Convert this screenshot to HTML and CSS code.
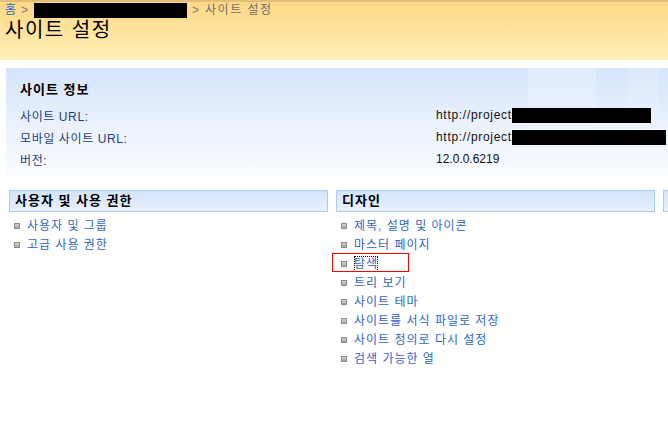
FILE: index.html
```html
<!DOCTYPE html>
<html lang="ko">
<head>
    <meta charset="UTF-8">
    <title>사이트 설정</title>
    <link rel="stylesheet" href="styles.css">
</head>
<body>

    <!-- Title area -->
    <header class="title-area">
        <div class="breadcrumb">
            <a href="#" class="crumb-home">홈</a>
            <span class="crumb-sep">&gt;</span>
            <span class="redact crumb-redact"></span>
            <span class="crumb-sep">&gt;</span>
            <span class="crumb-current">사이트 설정</span>
        </div>
        <h1 class="page-title">사이트 설정</h1>
    </header>

    <!-- Site info -->
    <section class="info-box">
        <div class="info-deco"></div>
        <h2 class="info-title">사이트 정보</h2>
        <div class="info-grid">
            <span class="info-label">사이트 URL:</span>
            <span class="info-value"><span class="url">http://project</span><span class="redact redact-1"></span></span>
            <span class="info-label">모바일 사이트 URL:</span>
            <span class="info-value"><span class="url">http://project</span><span class="redact redact-2"></span></span>
            <span class="info-label">버전:</span>
            <span class="info-value">12.0.0.6219</span>
        </div>
    </section>

    <!-- Settings columns -->
    <div class="columns">
        <div class="column">
            <h3 class="col-header">사용자 및 사용 권한</h3>
            <ul class="link-list">
                <li><a href="#">사용자 및 그룹</a></li>
                <li><a href="#">고급 사용 권한</a></li>
            </ul>
        </div>
        <div class="column">
            <h3 class="col-header">디자인</h3>
            <ul class="link-list">
                <li><a href="#">제목, 설명 및 아이콘</a></li>
                <li><a href="#">마스터 페이지</a></li>
                <li class="marked"><a href="#" class="focused">탐색</a></li>
                <li><a href="#">트리 보기</a></li>
                <li><a href="#">사이트 테마</a></li>
                <li><a href="#">사이트를 서식 파일로 저장</a></li>
                <li><a href="#">사이트 정의로 다시 설정</a></li>
                <li><a href="#">검색 가능한 열</a></li>
            </ul>
        </div>
        <div class="column column-cut">
            <h3 class="col-header">&nbsp;</h3>
        </div>
    </div>

</body>
</html>
```

FILE: styles.css
```css
/* --- Base --- */
body {
    margin: 0;
    font-family: 'Liberation Sans', 'Noto Sans CJK KR', sans-serif;
    font-size: 12px;
    color: #000;
    background: #fff;
    overflow: hidden;
    width: 668px;
}
a { text-decoration: none; }
ul { margin: 0; padding: 0; list-style: none; }

.redact {
    display: inline-block;
    background: #000;
    vertical-align: top;
}

/* --- Title area --- */
.title-area {
    height: 58px;
    border-top: 2px solid #e2bf78;
    background: linear-gradient(to bottom, #fed887 0%, #ffe49d 50%, #fff0b8 100%);
    padding-left: 5px;
}
.breadcrumb {
    display: flex;
    align-items: center;
    height: 17px;
    line-height: 17px;
    color: #6e6e6e;
}
.crumb-home { color: #2f68c8; }
.crumb-sep { margin: 0 4px 0 5px; color: #7a7a7a; }
.crumb-redact { width: 153px; height: 15px; margin-left: 2px; }
.crumb-current { margin-left: 2px; letter-spacing: 1.5px; }

.page-title {
    margin: 0;
    font-size: 20px;
    font-weight: 400;
    line-height: 22px;
    letter-spacing: 1.5px;
}

/* --- Site info --- */
.info-box {
    position: relative;
    margin: 8px 0 0 6px;
    height: 110px;
    padding: 15px 0 0 14px;
    box-sizing: border-box;
    background: linear-gradient(to bottom, #d5e5fb 0%, #e9f1fd 50%, #fbfdff 100%);
    overflow: hidden;
}
.info-deco {
    position: absolute;
    top: 0;
    right: 0;
    width: 140px;
    height: 100%;
    background:
        linear-gradient(to right, transparent 0, rgba(255,255,255,0.3) 0, rgba(255,255,255,0.3) 68px, transparent 68px, transparent 100px, rgba(255,255,255,0.2) 100px, rgba(255,255,255,0.2) 130px, transparent 130px);
    -webkit-mask-image: linear-gradient(to bottom, #000 0%, rgba(0,0,0,0.1) 100%);
}
.info-title {
    position: relative;
    margin: 0;
    font-size: 13px;
    font-weight: 700;
    line-height: 14px;
    letter-spacing: 1px;
}
.info-grid {
    position: relative;
    display: grid;
    grid-template-columns: 416px auto;
    grid-auto-rows: 22px;
    align-items: center;
    margin-top: 7px;
}
.info-label { color: #1d3d80; letter-spacing: 0.6px; }
.info-value { color: #111; white-space: nowrap; }
.url { letter-spacing: 0.7px; }
.redact-1 { width: 139px; height: 15px; }
.redact-2 { width: 154px; height: 15px; }

/* --- Columns --- */
.columns {
    display: flex;
    gap: 8px;
    margin: 12px 0 0 9px;
    overflow: hidden;
}
.column {
    flex: 0 0 319px;
}
.column-cut {
    flex: 1 1 0;
    min-width: 0;
}
.col-header {
    margin: 0;
    height: 22px;
    box-sizing: border-box;
    border: 1px solid #a9cbf6;
    background: linear-gradient(to bottom, #d3e4fc 0%, #e8f1fe 100%);
    padding-left: 5px;
    font-size: 13px;
    font-weight: 700;
    line-height: 19px;
    letter-spacing: 1px;
}
.column-cut .col-header { border-right: none; padding-left: 0; }

.link-list { margin-top: 4px; }
.link-list li {
    display: flex;
    align-items: center;
    height: 19px;
    padding-left: 5px;
}
.link-list li::before {
    content: "";
    width: 4px;
    height: 4px;
    margin-right: 7px;
    border: 1px solid #8c8c8c;
    background: linear-gradient(to bottom, #d6d6d6, #a4a4a4);
}
.link-list a { color: #3263c4; letter-spacing: 1px; line-height: 16px; }

.link-list li.marked { position: relative; }
.link-list li.marked::after {
    content: "";
    position: absolute;
    left: -4px;
    top: -1px;
    width: 77px;
    height: 19px;
    box-sizing: border-box;
    border: 1px solid #ff0000;
}
.focused { outline: 1px dotted #000; outline-offset: -1px; }
```
